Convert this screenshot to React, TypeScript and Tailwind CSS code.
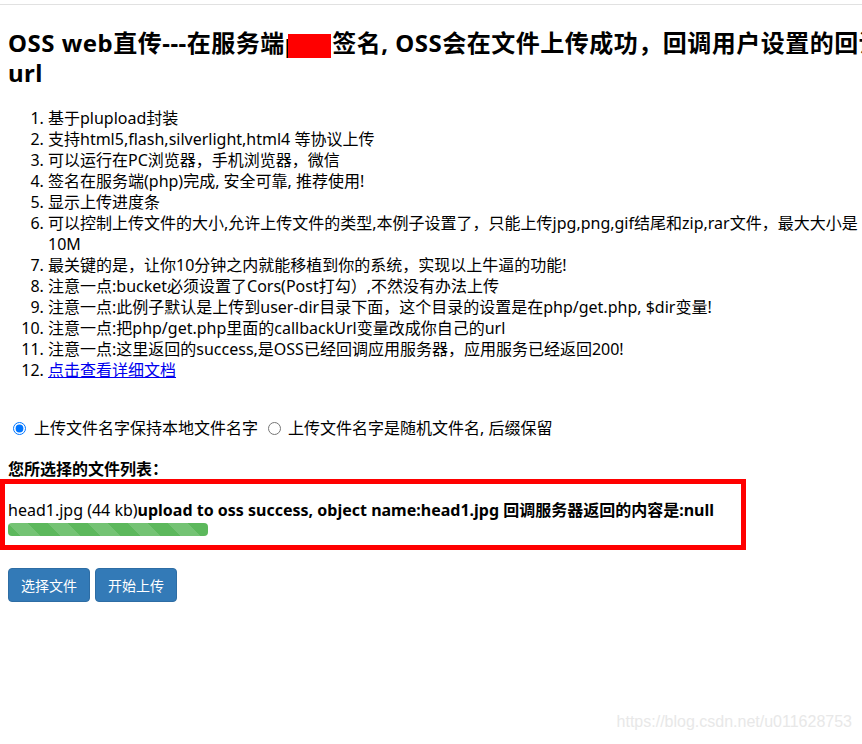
const FONT = "font-['Noto_Sans','Noto_Sans_CJK_SC',sans-serif]";

const items: React.ReactNode[] = [
  '基于plupload封装',
  '支持html5,flash,silverlight,html4 等协议上传',
  '可以运行在PC浏览器，手机浏览器，微信',
  '签名在服务端(php)完成, 安全可靠, 推荐使用!',
  '显示上传进度条',
  <>
    可以控制上传文件的大小,允许上传文件的类型,本例子设置了，只能上传jpg,png,gif结尾和zip,rar文件，最大大小是
    <br />
    10M
  </>,
  '最关键的是，让你10分钟之内就能移植到你的系统，实现以上牛逼的功能!',
  '注意一点:bucket必须设置了Cors(Post打勾）,不然没有办法上传',
  '注意一点:此例子默认是上传到user-dir目录下面，这个目录的设置是在php/get.php, $dir变量!',
  '注意一点:把php/get.php里面的callbackUrl变量改成你自己的url',
  '注意一点:这里返回的success,是OSS已经回调应用服务器，应用服务已经返回200!',
  <a href="#" className="text-[#0000ee] underline">
    点击查看详细文档
  </a>,
];

export default function App() {
  return (
    <div className={`relative w-[862px] h-[744px] overflow-hidden bg-white text-black ${FONT}`}>
      <div className="mt-[4px] h-px w-full bg-[#e1e1e1]" />

      <div className="w-[920px] px-2">
        <h1 className="mt-[23px] text-[24px] leading-[30px] font-bold tracking-[0.5px] whitespace-nowrap">
          OSS web直传---在服务端php签名, OSS会在文件上传成功，回调用户设置的回调
          <br />
          url
        </h1>

        <ol className="mt-[20px] list-decimal pl-10 text-[16px] leading-[21px] whitespace-nowrap">
          {items.map((it, i) => (
            <li key={i}>{it}</li>
          ))}
        </ol>

        <div className="mt-[37px] flex items-center text-[16px] leading-[21px]">
          <label className="flex items-center">
            <input type="radio" name="myradio" defaultChecked className="mx-[5px] h-[13px] w-[13px]" />
            <span className="ml-[3px]">上传文件名字保持本地文件名字</span>
          </label>
          <label className="ml-[5px] flex items-center">
            <input type="radio" name="myradio" className="mx-[5px] h-[13px] w-[13px]" />
            <span className="ml-[2px]">上传文件名字是随机文件名, 后缀保留</span>
          </label>
        </div>

        <h4 className="mt-[20px] text-[16px] leading-[21px] font-bold">您所选择的文件列表：</h4>
      </div>

      <div className="-mt-px h-[71px] w-[746px] border-[5px] border-[#ff0000] pt-[16px] pl-[3px]">
        <div className="text-[16px] leading-[21px] whitespace-nowrap">
          head1.jpg (44 kb)
          <b className="font-bold">upload to oss success, object name:head1.jpg 回调服务器返回的内容是:null</b>
        </div>
        <div className="mt-[2px] h-[13px] w-[200px] overflow-hidden rounded-[4px] bg-[#5cb85c] bg-[linear-gradient(45deg,rgba(255,255,255,.15)_25%,transparent_25%,transparent_50%,rgba(255,255,255,.15)_50%,rgba(255,255,255,.15)_75%,transparent_75%,transparent)] bg-[length:40px_40px]" />
      </div>

      <div className="mt-[18px] flex gap-[5px] px-2">
        <button className="h-[34px] rounded-[4px] border border-[#2e6da4] bg-[#337ab7] px-3 text-[14px] text-white">
          选择文件
        </button>
        <button className="h-[34px] rounded-[4px] border border-[#2e6da4] bg-[#337ab7] px-3 text-[14px] text-white">
          开始上传
        </button>
      </div>

      {/* redaction mark over the heading */}
      <div className="absolute left-[288px] top-[34px] h-[24px] w-[43px] bg-[#ff0000]" />

      {/* csdn watermark */}
      <div className="absolute right-[10px] bottom-[10px] font-['Liberation_Sans',sans-serif] text-[16px] text-[#e8e8e8]">
        https://blog.csdn.net/u011628753
      </div>
    </div>
  );
}
